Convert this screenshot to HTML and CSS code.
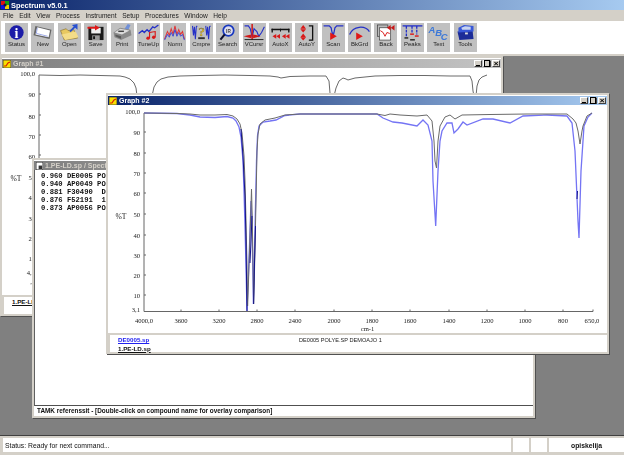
FILE: index.html
```html
<!DOCTYPE html>
<html lang="en">
<head>
<meta charset="utf-8">
<title>Spectrum v5.0.1</title>
<link rel="stylesheet" href="styles.css">
</head>
<body>
<div class="app">
  <header class="appbar">
    <svg class="appicon" viewBox="0 0 8 8"><rect width="8" height="8" fill="#fff"/><rect width="4" height="4" fill="#e01010"/><rect x="4" width="4" height="4" fill="#10a010"/><rect y="4" width="4" height="4" fill="#1010e0"/><rect x="4" y="4" width="4" height="4" fill="#f0d000"/><circle cx="4" cy="4" r="1.6" fill="#101040"/></svg>
    <span>Spectrum v5.0.1</span>
  </header>
  <nav class="menubar">
    <span>File</span><span>Edit</span><span>View</span><span>Process</span><span>Instrument</span><span>Setup</span><span>Procedures</span><span>Window</span><span>Help</span>
  </nav>
  <div class="toolbar">
    <div class="tool"><svg viewBox="0 0 23 18"><circle cx="11.5" cy="9" r="7.6" fill="#1c1ca8"/><text x="11.5" y="14.5" class="ic-i">i</text></svg><span>Status</span></div>
    <div class="tool"><svg viewBox="0 0 23 18"><polygon points="4,2 21,6 19,16 2,12" fill="#666"/><polygon points="6,3.5 19.5,7 18,14 4,11" fill="#fff"/><polyline points="6,4 5,10 17,13" fill="none" stroke="#9aa8e8"/></svg><span>New</span></div>
    <div class="tool"><svg viewBox="0 0 23 18"><polygon points="2,7 8,5 10,7 16,6 20,15 6,17" fill="#e8c860" stroke="#7a6428" stroke-width=".6"/><polygon points="3,11 18,8 21,14 7,17" fill="#f4dc88"/><polyline points="12,8 17,3" fill="none" stroke="#2850d0" stroke-width="2"/><polygon points="14,1 20,0 20,6" fill="#2850d0"/></svg><span>Open</span></div>
    <div class="tool"><svg viewBox="0 0 23 18"><polygon points="4,3 20,3 20,17 4,17" fill="#1a1a1a"/><rect x="7" y="4" width="10" height="6" fill="#f0f0f0"/><rect x="8" y="12" width="8" height="5" fill="#999"/><rect x="9" y="13" width="2" height="3" fill="#111"/><rect x="3" y="3" width="10" height="2" fill="#e01818"/><polygon points="11,1 16,4 11,7" fill="#e01818"/></svg><span>Save</span></div>
    <div class="tool"><svg viewBox="0 0 23 18"><polygon points="13,6 17,0 20,1 17,8" fill="#7090d8"/><polygon points="2,9 9,4 20,6 21,12 10,17 3,14" fill="#8a8a8a"/><polygon points="3,9 9,5 19,7 11,11" fill="#dcdcdc"/><polygon points="4,11 10,13 10,16 4,13" fill="#5a5a5a"/><rect x="7" y="7" width="6" height="1.5" fill="#444"/></svg><span>Print</span></div>
    <div class="tool"><svg viewBox="0 0 23 18"><polyline points="1,10 5,7 7,9 10,6 12,8 16,3 18,4 22,1" fill="none" stroke="#2430c8" stroke-width="1.4"/><circle cx="11" cy="15" r="1.8" fill="#d81818"/><circle cx="17" cy="14" r="1.8" fill="#d81818"/><polyline points="12.6,15 12.6,9 18.6,8 18.6,14" fill="none" stroke="#d81818" stroke-width="1.2"/></svg><span>TuneUp</span></div>
    <div class="tool"><svg viewBox="0 0 23 18"><polyline points="1,16 4,8 6,12 8,5 10,11 12,2 14,11 16,6 18,11 20,8 22,16" fill="none" stroke="#e03838" stroke-width="1.1"/><polyline points="1,17 4,11 6,14 8,9 10,13 12,6 14,13 16,9 18,13 20,11 22,17" fill="none" stroke="#3848d8" stroke-width="1"/></svg><span>Norm</span></div>
    <div class="tool"><svg viewBox="0 0 23 18"><polyline points="2,2 3,12 4,3 5,16 6,3 7,2" fill="none" stroke="#2430c8" stroke-width="1.1"/><polyline points="16,2 17,12 18,3 19,16 20,3 21,2" fill="none" stroke="#2430c8" stroke-width="1.1"/><text x="11.5" y="13" class="ic-q">?</text><rect x="8" y="14" width="7" height="2" fill="#333"/></svg><span>Cmpre</span></div>
    <div class="tool"><svg viewBox="0 0 23 18"><circle cx="12.5" cy="7" r="5.6" fill="#dde" stroke="#1838c0" stroke-width="1.8"/><text x="12.5" y="9" class="ic-ir">IR</text><line x1="8.5" y1="11" x2="4" y2="16.5" stroke="#101030" stroke-width="2.2"/></svg><span>Search</span></div>
    <div class="tool"><svg viewBox="0 0 23 18"><polyline points="1,2 5,2 7,5 9,14 11,5 14,8 16,13 19,9 22,3" fill="none" stroke="#2430c8" stroke-width="1.2"/><line x1="9" y1="0" x2="9" y2="17" stroke="#d01818" stroke-width="1.6"/><polygon points="0,13 8,11 8,15" fill="#d01818"/><polygon points="18,13 10,11 10,15" fill="#d01818"/><rect x="1" y="16" width="20" height="1" fill="#222"/></svg><span>VCursr</span></div>
    <div class="tool"><svg viewBox="0 0 23 18"><rect x="2" y="5" width="19" height="1.6" fill="#111"/><rect x="2" y="5" width="1.4" height="4" fill="#111"/><rect x="19.6" y="5" width="1.4" height="4" fill="#111"/><rect x="11" y="5" width="1" height="3" fill="#111"/><polygon points="3,13 7,10.5 7,15.5" fill="#d81818"/><polygon points="7,13 11,10.5 11,15.5" fill="#d81818"/><polygon points="13,13 17,10.5 17,15.5" fill="#d81818"/><polygon points="17,13 21,10.5 21,15.5" fill="#d81818"/></svg><span>AutoX</span></div>
    <div class="tool"><svg viewBox="0 0 23 18"><polygon points="8,1 11,5 5,5" fill="#d81818"/><polygon points="5,5.5 11,5.5 8,9" fill="#d81818"/><polygon points="8,10 11,14 5,14" fill="#d81818"/><polygon points="5,14 11,14 8,17.5" fill="#d81818"/><polyline points="14,2 18,2 18,17 14,17" fill="none" stroke="#111" stroke-width="1.4"/></svg><span>AutoY</span></div>
    <div class="tool"><svg viewBox="0 0 23 18"><polyline points="1,2 7,2 9,4 10,9 11,13 12,9 13,4 15,2 22,2" fill="none" stroke="#2430c8" stroke-width="1.3"/><polygon points="8,9 15,13 8,17" fill="#e01818"/></svg><span>Scan</span></div>
    <div class="tool"><svg viewBox="0 0 23 18"><path d="M1 11 C5 2 17 1 22 8" fill="none" stroke="#2430c8" stroke-width="1.3"/><polygon points="8,9 15,13 8,17" fill="#e01818"/></svg><span>BkGrd</span></div>
    <div class="tool"><svg viewBox="0 0 23 18"><rect x="3" y="1" width="11" height="12" fill="#bbb" stroke="#333" stroke-width=".7"/><rect x="5" y="4" width="12" height="13" fill="#fff" stroke="#333" stroke-width=".7"/><polyline points="6,7 9,9 11,13 13,9 16,10" fill="none" stroke="#d81818"/><polygon points="13,4 17,1 17,7" fill="#c81818"/><polygon points="17,4 21,1 21,7" fill="#c81818"/></svg><span>Back</span></div>
    <div class="tool"><svg viewBox="0 0 23 18"><polyline points="1,2 22,2" fill="none" stroke="#2430c8" stroke-width="1.4"/><path d="M5 2V13M11 2V9M16 2V11" fill="none" stroke="#2430c8" stroke-width="1.4" stroke-dasharray="3 1"/><rect x="3" y="14" width="4" height="1.5" fill="#222"/><rect x="9" y="10" width="4" height="1.5" fill="#d81818"/><rect x="14" y="12" width="4" height="1.5" fill="#d81818"/><rect x="9" y="16" width="5" height="1.5" fill="#222"/></svg><span>Peaks</span></div>
    <div class="tool"><svg viewBox="0 0 23 18"><text x="1" y="9" class="ic-a">A</text><text x="8" y="13" class="ic-a">B</text><text x="14" y="17" class="ic-a">C</text></svg><span>Text</span></div>
    <div class="tool"><svg viewBox="0 0 23 18"><polygon points="3,8 19,7 20,16 5,17" fill="#1c2c98"/><polygon points="4,4 10,1 20,2 20,8 4,9" fill="#3858d8"/><polygon points="7,4 11,2.5 17,3 17,6 8,6" fill="#c8d4f0"/><rect x="11" y="9" width="3" height="2" fill="#ddd"/></svg><span>Tools</span></div>
  </div>

  <main class="desktop">
    <section class="win win-one inactive">
      <div class="wintitle">
        <svg class="graphicon" viewBox="0 0 8 8"><rect width="8" height="8" fill="#f8e000" stroke="#333" stroke-width=".8"/><polyline points="1,6 3,6 5,3 7,2" fill="none" stroke="#d82000" stroke-width="1.2"/></svg>
        <span class="wintext">Graph #1</span>
        <div class="winbtns"><b class="btn btn-min"></b><b class="btn btn-max"></b><b class="btn btn-close">×</b></div>
      </div>
      <svg class="plot" viewBox="2 67 499 227">
        <g class="lab">
          <text x="35" y="74.5">100,0</text><text x="35" y="95.5">90</text><text x="35" y="117.5">80</text><text x="35" y="137.5">70</text><text x="35" y="157.5">60</text><text x="35" y="178.5">50</text><text x="35" y="198.5">40</text><text x="35" y="219.5">30</text><text x="35" y="239.5">20</text><text x="35" y="259.5">10</text><text x="35" y="274">4,8</text><text x="32" y="283">,</text>
        </g>
        <text x="16" y="180" class="axname">%T</text>
        <path class="axis" d="M39 74V292M39 93h2M39 114h2M39 134h2M39 154h2"/>
        <polyline class="curve-gray" points="39,74 60,74.5 80,74 100,74.5 120,75 125,76 130,78 134,82 136,87 137,95"/>
        <polyline class="curve-gray" points="152,95 154,86 157,81 161,78 168,76 180,75 200,74.5 225,74 250,74.5 270,75 278,76 281,77 290,75.5 310,75 326,75 329,80 330,92 331,95"/>
        <polyline class="curve-gray" points="334,95 336,87 339,80 343,77 346,78 348,79 355,77 375,75 400,74.5 425,74.5 450,75 470,75 472,80 473,90 474,95"/>
        <polyline class="curve-gray" points="476,95 477,85 479,79 482,76 487,74"/>
      </svg>
      <footer class="winfoot"><a class="file">1.PE-LD.sp</a></footer>
    </section>

    <section class="win win-list inactive">
      <div class="wintitle">
        <svg class="pageicon" viewBox="0 0 8 9"><rect width="8" height="9" fill="#fff" stroke="#222"/><rect x="3" y="4" width="4" height="4" fill="#333"/></svg>
        <span class="wintext">1.PE-LD.sp / Spectrum</span>
      </div>
      <pre class="hits">0.960 DE0005 POLYE.SP
0.940 AP0049 POLYE.SP
0.881 F30490  DEMOAJO
0.876 F52191  1
0.873 AP0056 POLYE.SP</pre>
      <footer class="listfoot">TAMK referenssit - [Double-click on compound name for overlay comparison]</footer>
    </section>

    <section class="win win-two">
      <div class="wintitle">
        <svg class="graphicon" viewBox="0 0 8 8"><rect width="8" height="8" fill="#f8e000" stroke="#333" stroke-width=".8"/><polyline points="1,6 3,6 5,3 7,2" fill="none" stroke="#d82000" stroke-width="1.2"/></svg>
        <span class="wintext">Graph #2</span>
        <div class="winbtns"><b class="btn btn-min"></b><b class="btn btn-max"></b><b class="btn btn-close">×</b></div>
      </div>
      <svg class="plot" viewBox="108 104 499 228">
        <g class="lab">
          <text x="140" y="112.5">100,0</text><text x="140" y="133.5">90</text><text x="140" y="154.5">80</text><text x="140" y="174.5">70</text><text x="140" y="194.5">60</text><text x="140" y="215.5">50</text><text x="140" y="237">40</text><text x="140" y="256.5">30</text><text x="140" y="276.5">20</text><text x="140" y="296.5">10</text><text x="140" y="310.5">3,1</text>
        </g>
        <text x="121" y="218" class="axname">%T</text>
        <g class="lab mid">
          <text x="144" y="321.5">4000,0</text><text x="181" y="321.5">3600</text><text x="219" y="321.5">3200</text><text x="257" y="321.5">2800</text><text x="295" y="321.5">2400</text><text x="334" y="321.5">2000</text><text x="372" y="321.5">1800</text><text x="410" y="321.5">1600</text><text x="449" y="321.5">1400</text><text x="487" y="321.5">1200</text><text x="525" y="321.5">1000</text><text x="563" y="321.5">800</text><text x="592" y="321.5">650,0</text><text x="367.5" y="329.5">cm-1</text>
        </g>
        <path class="axis" d="M144 112V310.5H593M144 131h2M144 152h2M144 172h2M144 192h2M144 213h2M144 234h2M144 254h2M144 274h2M144 294h2M181 310.5v-2M219 310.5v-2M257 310.5v-2M295 310.5v-2M334 310.5v-2M372 310.5v-2M410 310.5v-2M449 310.5v-2M487 310.5v-2M525 310.5v-2M563 310.5v-2M593 310.5v-2"/>
        <polyline class="curve-blue" points="144,112 177,112.5 190,114 200,116 215,116.5 227,115.5 233,117 236,120 239,126 241,136 243,160 244,190 245,225 246,265 247,310 248,285 249.5,245 251,200 252,225 252.8,268 253.4,303 254,275 255.5,205 256.5,160 257.5,135 259,125 263,121 270,120 276,119 285,114.5 300,113 340,113 377,113 383,117 393,121 402,122 417,125 423,119 428,124 432,140 433,180 435.7,225 438,170 440,140 442,130 447,122 452,122 454,132 458,128 463,121 467,124 483,118 493,118 510,122 523,115 547,114 567,115 572,122 575,150 578,220 579,237 581,170 584,125 588,116 592,112"/>
        <polyline class="curve-gray" points="144,112 177,112.5 190,113 200,114 215,114 227,113.5 233,115 237,118 240,123 242,132 244,155 245,180 246,220 247,265 247.6,305 248.5,280 250,235 251.5,188 252.2,215 253,262 253.6,303 254.5,270 256,200 257,150 258,133 260,123 265,119 275,117 285,114 300,113 330,113 377,113 385,114.5 390,113 400,114 417,115 427,114 432,120 434,140 435,160 436.5,167 438,140 440,125 445,116 450,114 455,118 462,114 490,113.5 527,113 567,113 573,118 576,122 578,130 580,143 582,130 583,125 587,115 592,112"/>
        <polyline class="curve-navy" points="241,128 243,155 245,195 246,240 247,310"/>
        <polyline class="curve-navy" points="253.6,303 254.5,262 255.5,225"/>
        <polyline class="curve-navy" points="252,215 251,240 250,262"/>
        <line class="curve-navy" x1="577.5" y1="190" x2="577" y2="198"/>
      </svg>
      <footer class="winfoot">
        <div class="files"><a class="file blue">DE0005.sp</a><a class="file">1.PE-LD.sp</a></div>
        <span class="desc">DE0005 POLYE.SP DEMOAJO 1</span>
      </footer>
    </section>
  </main>

  <footer class="statusbar">
    <div class="cell cell-main">Status: Ready for next command...</div>
    <div class="cell cell-small"></div>
    <div class="cell cell-small"></div>
    <div class="cell cell-user">opiskelija</div>
  </footer>
</div>
</body>
</html>
```

FILE: styles.css
```css
* { box-sizing: border-box; }
html, body { margin: 0; padding: 0; }
body { width: 624px; height: 455px; overflow: hidden; background: #d4d0c8; font-family: "Liberation Sans", Arial, sans-serif; }
.app { width: 624px; height: 455px; display: flex; flex-direction: column; filter: blur(.35px); }

.appbar { height: 10px; display: flex; align-items: center; gap: 2px; padding-left: 1px; background: linear-gradient(90deg, #0a246a, #a6caf0); color: #fff; font-size: 7.4px; font-weight: bold; }
.appicon { width: 8px; height: 8px; }

.menubar { height: 10px; display: flex; align-items: center; gap: 5.6px; padding-left: 3px; background: #d4d0c8; font-size: 6.6px; color: #222; }

.toolbar { height: 35px; margin-top: 1px; display: flex; align-items: flex-start; gap: 3.4px; padding: 2px 0 0 4px; background: #fff; border-bottom: 2px solid #d4d0c8; border-left: 1px solid #d4d0c8; }
.tool { width: 23px; height: 29px; flex: none; display: flex; flex-direction: column; align-items: center; background: #c0c0c0; font-size: 6px; color: #222; white-space: nowrap; }
.tool svg { width: 23px; height: 17px; flex: none; margin-top: 1px; }
.tool span { margin-top: 0; line-height: 7px; }
.ic-i { font: bold 15px "Liberation Serif", serif; fill: #fff; text-anchor: middle; }
.ic-q { font: bold 14px "Liberation Serif", serif; fill: #e8c020; stroke: #555; stroke-width: .3; text-anchor: middle; }
.ic-ir { font: bold 5px "Liberation Sans", sans-serif; fill: #444; text-anchor: middle; }
.ic-a { font: italic bold 10px "Liberation Sans", sans-serif; fill: #3c78d8; }

.desktop { position: relative; flex: 1; background: #808080; overflow: hidden; }
.win { position: absolute; width: 503px; display: flex; flex-direction: column; background: #fff; border: 2px solid #d4d0c8; box-shadow: 1px 1px 0 #505050; }
.win-one { left: 0; top: 0; height: 260px; }
.win-list { left: 32px; top: 102px; height: 260px; }
.win-two { left: 106px; top: 37px; height: 261px; }

.wintitle { height: 9px; margin-top: 1px; flex: none; display: flex; align-items: center; gap: 2px; padding-left: 1px; background: linear-gradient(90deg, #0a246a, #a6caf0); color: #fff; font-size: 7px; font-weight: bold; white-space: nowrap; overflow: hidden; }
.inactive .wintitle { background: linear-gradient(90deg, #808080, #c4c4c4); color: #d4d0c8; }
.graphicon { width: 8px; height: 8px; flex: none; }
.pageicon { width: 7px; height: 8px; flex: none; margin-left: 1px; }
.winbtns { margin-left: auto; display: flex; gap: 1px; padding-right: 1px; }
.btn { position: relative; width: 8px; height: 7.5px; display: flex; align-items: center; justify-content: center; background: #d4d0c8; border: 1px solid; border-color: #fff #404040 #404040 #fff; color: #000; font-size: 8px; line-height: 5px; font-weight: bold; }
.btn-min::after { content: ""; position: absolute; left: 1px; bottom: 0; width: 4px; height: 1.5px; background: #000; }
.btn-max::after { content: ""; width: 5px; height: 4.5px; border: 1px solid #000; border-top-width: 1.5px; }

.plot { display: block; flex: 1; min-height: 0; width: 100%; }
.lab text { font: 6.6px "Liberation Serif", serif; fill: #222; text-anchor: end; }
.lab.mid text { text-anchor: middle; }
.axname { font: 7.6px "Liberation Serif", serif; fill: #222; text-anchor: middle; }
.axis { fill: none; stroke: #666; stroke-width: 1; }
.curve-gray { fill: none; stroke: #6a6a6a; stroke-width: 1; }
.curve-blue { fill: none; stroke: #7474f4; stroke-width: 1.3; }
.curve-navy { fill: none; stroke: #14148c; stroke-width: 1; }

.winfoot { height: 19px; flex: none; display: flex; align-items: flex-start; padding: 1px 0 0 8px; background: #fff; border: 2px solid #d4d0c8; border-width: 2px 0 0 2px; font-size: 6.2px; }
.files { width: 181px; flex: none; display: flex; flex-direction: column; }
.file { display: block; font-weight: bold; text-decoration: underline; color: #111; line-height: 8.5px; }
.file.blue { color: #2020f0; }
.desc { font-size: 5.6px; line-height: 8px; color: #222; }

.hits { flex: 1; margin: 0; padding: 1.5px 0 0 6px; font: bold 7.2px/8px "Liberation Mono", monospace; color: #111; border-bottom: 1px solid #505050; border-left: 1px solid #606060; overflow: hidden; }
.listfoot { height: 10px; flex: none; padding-left: 3px; font-size: 6.4px; font-weight: bold; line-height: 9px; color: #111; white-space: nowrap; overflow: hidden; }

.statusbar { height: 20px; flex: none; display: flex; gap: 2px; padding: 2px 0 3px 3px; background: #d4d0c8; border-top: 1px solid #404040; font-size: 6.8px; color: #111; }
.cell { background: #fff; display: flex; align-items: center; }
.cell-main { width: 508px; padding-left: 2px; }
.cell-small { width: 16px; }
.cell-user { flex: 1; justify-content: center; font-weight: bold; }
```
